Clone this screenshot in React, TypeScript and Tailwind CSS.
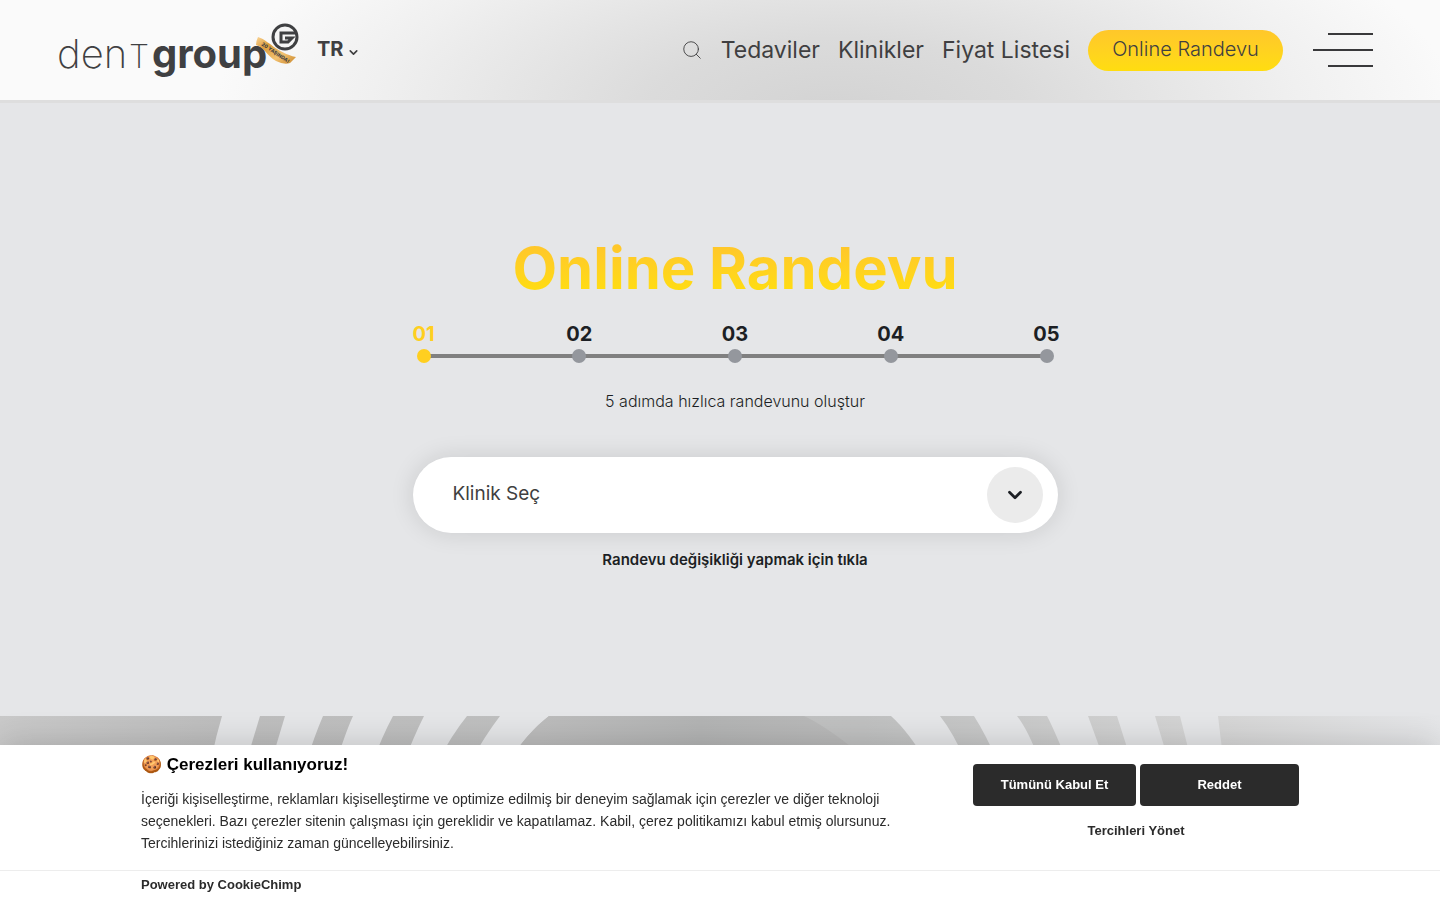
import { Search, ChevronDown } from "lucide-react";

const NAV_LINKS = ["Tedaviler", "Klinikler", "Fiyat Listesi"];
const STEPS = ["01", "02", "03", "04", "05"];

function Logo() {
  return (
    <svg width="242" height="56" viewBox="0 0 242 56" role="img" aria-label="dentgroup" fill="#3f4042" className="overflow-visible">
      <defs>
        <linearGradient id="ribbon" x1="0" y1="0" x2="1" y2="1">
          <stop offset="0" stopColor="#fbd596" />
          <stop offset="0.3" stopColor="#dd9d3c" />
          <stop offset="0.65" stopColor="#f3c272" />
          <stop offset="1" stopColor="#c9872a" />
        </linearGradient>
      </defs>
      <text x="0" y="46" fontFamily="Inter, sans-serif" fontSize="40" fontWeight="200">den</text>
      <text x="72" y="46" fontFamily="Inter, sans-serif" fontSize="32" fontWeight="200">T</text>
      <text x="95" y="46" fontFamily="Inter, sans-serif" fontSize="40" fontWeight="700">group</text>
      <path d="M201 15 C211 18 220 31 239 35 L233 41 Q227 43 219 39 C210 34 208 26 199 23 Q199 19 201 15Z" fill="url(#ribbon)" />
      <text x="204" y="23" fontFamily="Inter, sans-serif" fontSize="5" fontWeight="800" transform="rotate(34 204 23)">20 YAŞINDA!</text>
      <circle cx="228" cy="15" r="12" fill="#f5f5f5" stroke="#3f4042" strokeWidth="3" />
      <path d="M240 11 H224 V20 H231 L235 16 H228" fill="none" stroke="#3f4042" strokeWidth="3" />
    </svg>
  );
}

function Header() {
  return (
    <header className="border-b-[3px] border-[#dedede] bg-[radial-gradient(ellipse_620px_240px_at_58%_110%,#d3d3d3_0%,#dbdbdb_30%,#f0f0f0_75%,#fafafa_100%)]">
      <div className="flex h-[100px] items-center pr-[67px] pl-[57px]">
        <a href="#" aria-label="dentgroup">
          <Logo />
        </a>
        <button className="ml-[18px] flex items-center gap-1 pb-[2px] text-[20px] font-bold">
          TR
          <ChevronDown size={13} strokeWidth={3} className="mt-[6px]" />
        </button>
        <nav className="ml-auto flex items-center gap-[18px] text-[23px] leading-8">
          <button aria-label="Ara">
            <Search size={22} strokeWidth={1} />
          </button>
          {NAV_LINKS.map((label) => (
            <a key={label} href="#">{label}</a>
          ))}
          <a
            href="#"
            className="flex h-[41px] w-[195px] items-center justify-center rounded-full bg-linear-to-b from-[#ffc72a] to-[#ffdd0f] pb-[2px] text-[20px] font-light"
          >
            Online Randevu
          </a>
        </nav>
        <button aria-label="Menü" className="ml-[30px] flex flex-col items-end gap-[14px]">
          <span className="h-[2px] w-[45px] bg-[#39393b]" />
          <span className="h-[2px] w-[60px] bg-[#39393b]" />
          <span className="h-[2px] w-[45px] bg-[#39393b]" />
        </button>
      </div>
    </header>
  );
}

function Steps() {
  return (
    <ol className="mt-[18px] flex w-full justify-between bg-[linear-gradient(#808080,#808080)] bg-[length:620px_4px] bg-[position:center_32px] bg-no-repeat">
      {STEPS.map((step, i) => (
        <li key={step} className="flex w-[22px] flex-col items-center text-[20px] leading-6 font-bold text-[#1c1f24]">
          <span className={i === 0 ? "text-[#ffcf20]" : ""}>{step}</span>
          <span className={`mt-[3px] h-[14px] w-[14px] rounded-full ${i === 0 ? "bg-[#ffcf20]" : "bg-[#94979d]"}`} />
        </li>
      ))}
    </ol>
  );
}

function Appointment() {
  return (
    <main className="flex flex-col items-center px-4 pt-[129px] pb-[144px] text-[#1c1f24] lg:pl-[46px]">
      <div className="flex w-full max-w-[645px] flex-col items-center">
        <h1 className="bg-linear-to-b from-[#ffc72a] from-20% to-[#ffdc12] to-80% bg-clip-text text-[58px] leading-[72px] font-bold text-transparent">
          Online Randevu
        </h1>
        <Steps />
        <p className="mt-[26px] text-base font-light">5 adımda hızlıca randevunu oluştur</p>
        <div className="relative mt-11 w-full">
          <select
            aria-label="Klinik Seç"
            className="block h-[76px] w-full appearance-none rounded-full bg-white px-10 pb-[2px] text-[19px] text-[#3f3f41] shadow-[0_0_25px_rgba(0,0,0,0.12)]"
          >
            <option>Klinik Seç</option>
          </select>
          <span className="pointer-events-none absolute top-[10px] right-[15px] flex h-14 w-14 items-center justify-center rounded-full bg-[#ebebeb]">
            <ChevronDown size={22} strokeWidth={3} />
          </span>
        </div>
        <a href="#" className="mt-[15px] text-[15px] leading-6 font-semibold">
          Randevu değişikliği yapmak için tıkla
        </a>
      </div>
    </main>
  );
}

function Pattern() {
  return (
    <svg viewBox="0 0 1440 184" className="block w-full" aria-hidden="true">
      <defs>
        <linearGradient id="band" x1="0" y1="0" x2="1440" y2="0" gradientUnits="userSpaceOnUse">
          <stop offset="0" stopColor="#c9c9c9" />
          <stop offset="0.15" stopColor="#bebebe" />
          <stop offset="0.6" stopColor="#c0c1c1" />
          <stop offset="0.85" stopColor="#d6d6d6" />
          <stop offset="1" stopColor="#e5e6e8" />
        </linearGradient>
        <linearGradient id="core" x1="540" y1="0" x2="860" y2="0" gradientUnits="userSpaceOnUse">
          <stop offset="0" stopColor="#bcbcbc" />
          <stop offset="0.5" stopColor="#b3b4b4" />
          <stop offset="1" stopColor="#bababa" />
        </linearGradient>
      </defs>
      <g fill="url(#band)">
        <path d="M0 0H222Q216 20 212 40L190 184H0Z" />
        <path d="M260 0H285L264 70H239Z" />
        <path d="M323 0H353Q343 22 329 70H299Q311 28 323 0Z" />
        <path d="M393 0H424Q410 28 395 70H364Q378 28 393 0Z" />
        <path d="M467 0H500Q480 26 460 66H428Q446 26 467 0Z" />
        <path d="M549 0H891Q910 17 930 52L980 184H470L500 60Q520 23 549 0Z" />
        <path d="M940 0H974Q988 22 1004 60H972Q956 20 940 0Z" />
        <path d="M1017 0H1047Q1055 15 1073 60H1045Q1030 16 1017 0Z" />
        <path d="M1088 0H1117L1136 60H1110Z" />
        <path d="M1155 0H1180L1195 60H1173Z" />
        <path d="M1218 0H1440V184H1240Z" />
      </g>
      <path d="M549 0H804Q826 10 860 38L900 80H490Q517 24 549 0Z" fill="url(#core)" />
    </svg>
  );
}

function CookieBanner() {
  return (
    <section
      aria-label="Çerezler"
      className="fixed inset-x-0 bottom-0 bg-white font-['Liberation_Sans',Arial,sans-serif] text-[#2b2b2b] shadow-[0_0_32px_rgba(0,0,0,0.18)]"
    >
      <div className="mx-auto flex max-w-[1158px] items-start justify-between gap-8 pt-2 pb-4">
        <div className="max-w-[780px]">
          <h2 className="text-[17px] leading-6 font-bold text-black">🍪 Çerezleri kullanıyoruz!</h2>
          <p className="mt-[11px] text-[14px] leading-[22px]">
            İçeriği kişiselleştirme, reklamları kişiselleştirme ve optimize edilmiş bir deneyim sağlamak için çerezler ve diğer teknoloji
            seçenekleri. Bazı çerezler sitenin çalışması için gereklidir ve kapatılamaz. Kabil, çerez politikamızı kabul etmiş olursunuz.
            Tercihlerinizi istediğiniz zaman güncelleyebilirsiniz.
          </p>
        </div>
        <div className="mt-[11px] flex shrink-0 flex-col items-center text-[13px] font-bold">
          <div className="flex gap-1 text-white">
            <button className="h-[42px] w-[163px] rounded bg-[#2b2b2b]">Tümünü Kabul Et</button>
            <button className="h-[42px] w-[159px] rounded bg-[#2b2b2b]">Reddet</button>
          </div>
          <button className="mt-[15px]">Tercihleri Yönet</button>
        </div>
      </div>
      <div className="border-t border-[#ededed]">
        <div className="mx-auto max-w-[1158px] pt-1 pb-[5px] text-[13px] leading-5 font-bold">
          <a href="#">Powered by CookieChimp</a>
        </div>
      </div>
    </section>
  );
}

export default function App() {
  return (
    <div className="h-screen overflow-hidden bg-[#e5e6e8] font-[Inter,sans-serif] text-[#3f3f41]">
      <Header />
      <Appointment />
      <Pattern />
      <CookieBanner />
    </div>
  );
}
